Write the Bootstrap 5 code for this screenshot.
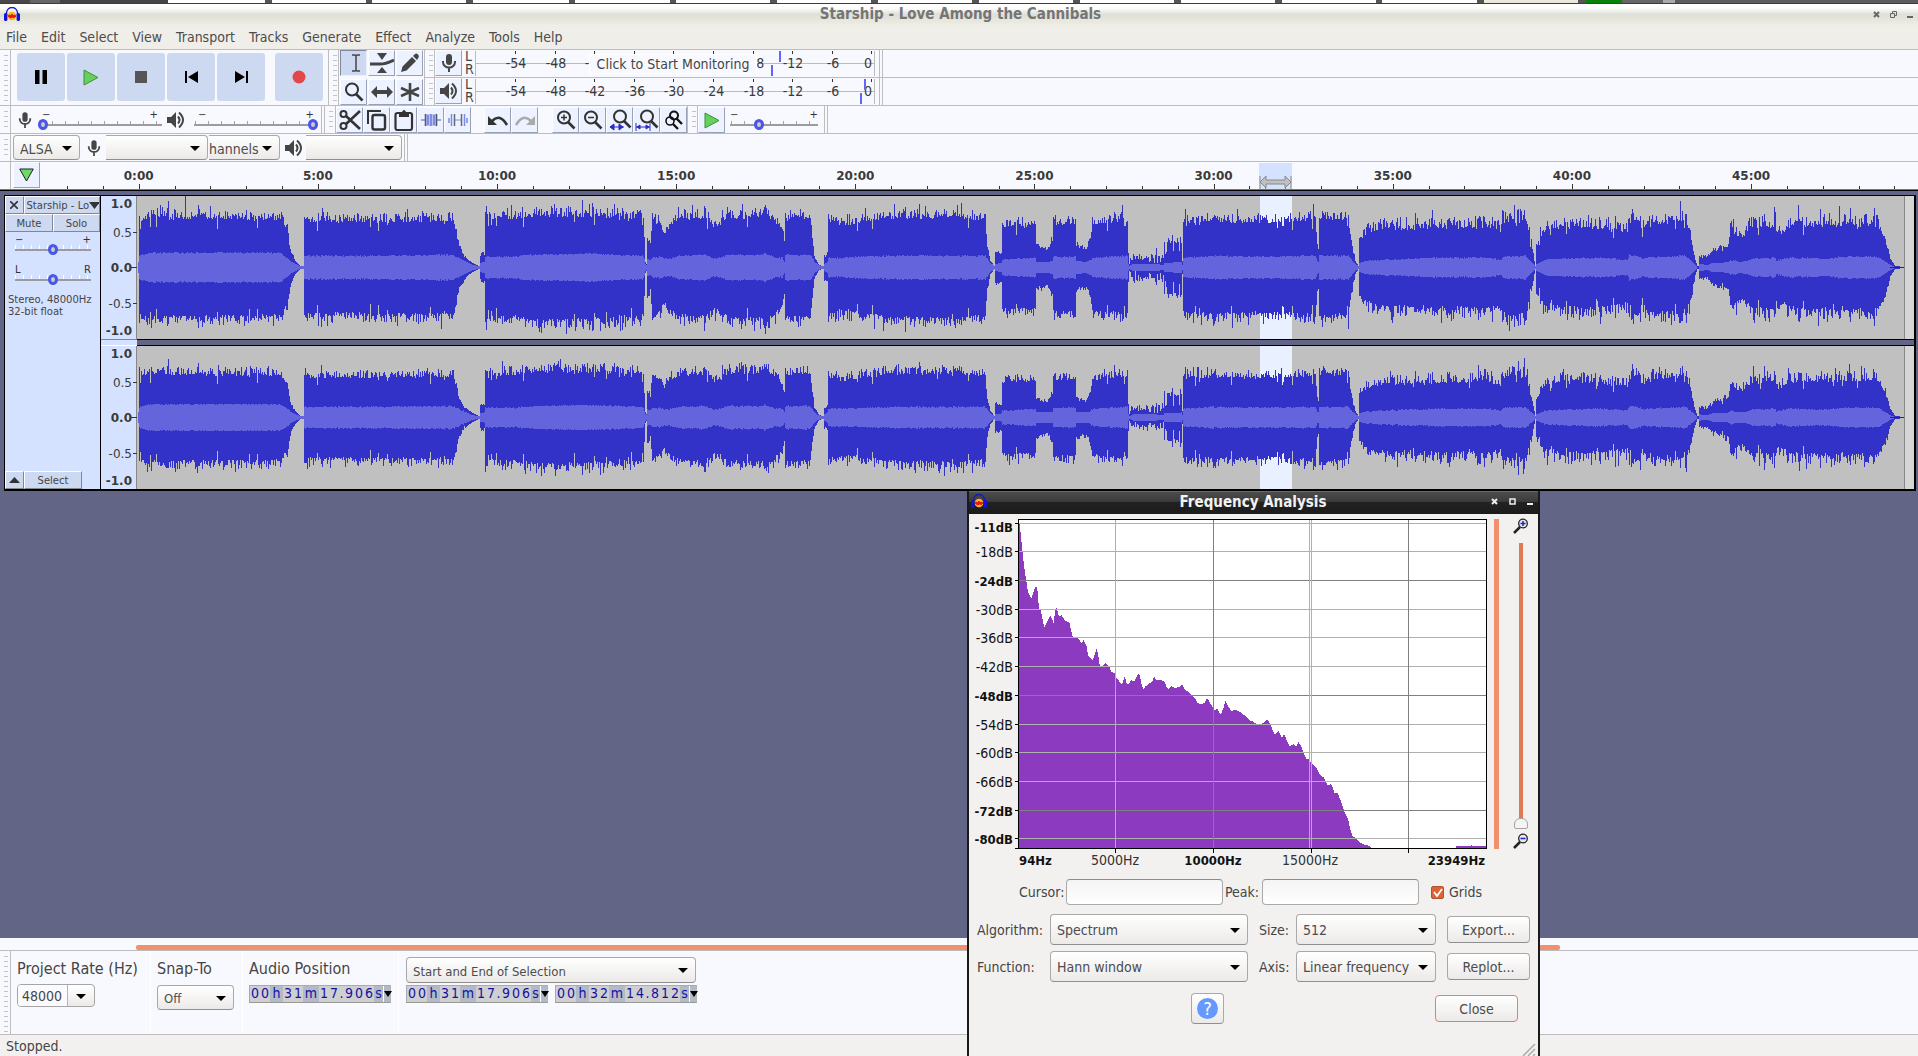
<!DOCTYPE html>
<html lang="en">
<head>
<meta charset="utf-8">
<meta name="viewport" content="width=device-width, initial-scale=1">
<title>Starship - Love Among the Cannibals</title>
<link rel="stylesheet" href="https://cdn.jsdelivr.net/npm/bootstrap@5.3.0/dist/css/bootstrap.min.css">
<style>
:root{--ui:"DejaVu Sans Condensed","DejaVu Sans",sans-serif;--wide:"DejaVu Sans",sans-serif;--rule:#bdbdbd;--paper:#f8f9ff}
body{font:14px/18px var(--ui);color:#454545;background:var(--paper);overflow:hidden}
button,input,select{font:inherit;color:inherit}
svg{display:block;flex:none}
.strip{height:4px;border-bottom:1px solid #3c3c40;background:linear-gradient(90deg,#484848 0 30px,#666 30px 60px,#444 60px 168px,#fff 168px 265px,#555 265px 272px,#fff 272px 366px,#555 366px 372px,#fff 372px 466px,#555 466px 473px,#fff 473px 569px,#555 569px 575px,#fff 575px 670px,#555 670px 676px,#fff 676px 770px,#555 770px 777px,#fff 777px 871px,#555 871px 878px,#fff 878px 972px,#555 972px 979px,#fff 979px 1073px,#555 1073px 1080px,#fff 1080px 1174px,#555 1174px 1181px,#fff 1181px 1275px,#555 1275px 1282px,#fff 1282px 1376px,#555 1376px 1382px,#fff 1382px 1477px,#555 1477px 1484px,#ece8dc 1484px 1578px,#555 1578px 1586px,#0a820a 1586px 1622px,#666 1622px 1663px,#aaa 1663px 1675px,#5c5c5c 1675px)}
.titlebar{height:21px;background:linear-gradient(#fff 0,#fdfdfb 20%,#dddfd8 50%,#e6e6dc 75%,#eeede5);font:bold 15px/18px var(--ui);color:#757575}
.titlebar .winbtns{width:41px}
.titlebar .caption-text{padding:0 0 2px 28px}
.plainbtn{background:none;border:0;padding:0;display:flex;align-items:center;justify-content:center}
.menubar{height:24px;background:#f0eee9}
.menubar a{color:#4c4c4c;text-decoration:none;padding:0 7px 0 6px;margin-right:1px;line-height:24px}
.bar-row{height:28px;border-top:1px solid var(--rule)}
.grip{width:11px;flex:none;border-right:1px solid var(--rule);background:repeating-linear-gradient(#0000 0 3px,#c4c4c4 3px 4px,#0000 4px 5px) 4px 2px/4px calc(100% - 4px) no-repeat}
.endcap{width:4px;flex:none;border-left:1px solid var(--rule);border-right:1px solid var(--rule)}
.tbtn{width:27px;height:26px;flex:none;padding:0;background:#ecf2ff;border:1px solid;border-color:#fdfdff #98a1b5 #98a1b5 #fdfdff;display:flex;align-items:center;justify-content:center;border-radius:0}
.edit-row .tbtn{margin-top:1px}
.tbtn.pressed{background:#cdd9f0;border-color:#7d879f #eef #eef #7d879f}
.big{width:48px;height:48px;border:0;border-radius:3px;background:#cdd9f0;padding:0;display:flex;align-items:center;justify-content:center}
.lr{width:14px;font:14px/13px var(--ui);padding-left:3px}
.meter{width:400px;height:27px;position:relative;border:0;padding:0;background:none;margin-left:-1px}
.tip{left:114px;top:4px;width:168px;background:var(--paper);line-height:18px;border:1px solid #fff;white-space:nowrap}
.pm{font:10px/9px var(--wide);height:9px;color:#333}
.sld{display:flex;flex-direction:column}
input.slide{appearance:none;-webkit-appearance:none;height:11px;margin:0;padding:0;display:block;background:linear-gradient(#9c9c9c,#9c9c9c) 0 5px/100% 2px no-repeat,repeating-linear-gradient(90deg,#a4a4a4 0 1px,#0000 1px 13px) 1px 2px/100% 4px no-repeat;width:100%}
input.slide::-webkit-slider-thumb{-webkit-appearance:none;width:10px;height:11px;border-radius:50%;background:#ccc;border:3px solid #4a55ea}
.track-panel input.slide{background:linear-gradient(#9c9c9c,#9c9c9c) 0 5px/100% 2px no-repeat,repeating-linear-gradient(90deg,#fff 0 1px,#0000 1px 8px) 0 1px/100% 4px no-repeat}
.combo{position:relative;flex:none}
.combo select{appearance:none;-webkit-appearance:none;display:block;width:100%;height:100%;border:1px solid #a9a9a9;border-bottom-color:#8f8f8f;border-radius:4px;background:linear-gradient(#fff,#eceae8);padding:0 0 0 6px;color:#4c4c4c}
.combo::after{content:"";position:absolute;right:8px;top:50%;margin-top:-2px;border:5px solid transparent;border-top:5px solid #000;border-bottom:0;pointer-events:none}
.device-row select,.selbar .combo select{padding-top:3px}
.combo.cut select{border-left:0;border-radius:0 4px 4px 0;padding-left:0}
.timeline{height:28px;border-top:1px solid var(--rule)}
.work{background:#626585;border-top:1px solid #777;box-shadow:inset 0 1px #000;flex:1;padding:5px 2px 0 4px;min-height:0}
.track{border:1px solid #000;border-right-width:2px;border-bottom-width:2px}
.track-panel{width:96px;flex:none;background:#d5e2ff;border-right:1px solid #000;font:10px/12px var(--wide)}
.flatbtn{background:#cdd9f0;border:1px solid;border-color:#fdfdff #808890 #808890 #fdfdff;border-radius:0;padding:0;height:18px;line-height:15px;text-align:center;white-space:nowrap;overflow:hidden}
.flatbtn.name-menu{padding-left:2px;justify-content:space-between;padding-right:1px}
.hscroll{height:12px;padding-top:7px;background:var(--paper)}
.hscroll div{height:5px;background:#f0906c;border-radius:2px;margin-left:136px;margin-right:358px}
.selbar{height:84px;border-top:1px solid var(--rule);font-size:16px}
.selbar .combo{font-size:13px}
.divide{width:1px;background:#fff;flex:none}
.timebox{height:18px;width:142px;background:#b3bac6;border:1px solid #bbb;border-color:#a5abb5 #b5b5b5 #999 #a5abb5;font:14px/15px var(--ui);color:#1010a8;flex:none}
.timebox span{text-align:center;flex:none}
.timebox .dg{width:10px;background:#cfcfcf}
.timebox .u-h{width:13px}
.timebox .u-m{width:16px}
.timebox .u-s{width:9px}
.timebox .dot{width:5px;background:#cfcfcf}
.timebox button{width:8px;flex:none;border:0;border-left:1px solid #fff;background:none;padding:0;display:flex;align-items:center}
.status{height:22px;border-top:1px solid var(--rule);background:#f2f1f0;padding:1px 6px;line-height:20px}
.rate{width:78px;height:23px;border:1px solid #a5a5a5;border-radius:4px;background:linear-gradient(#fff,#eceae8);overflow:hidden}
.rate input{width:50px;border:0;border-right:1px solid #b5b5b5;background:#fbfbff;padding:0 0 0 4px;font-size:14px}
.dialog{position:absolute;left:967px;top:491px;width:573px;height:565px;background:#f2f1f0;border:solid #1a1a1a;border-width:0 2px;display:flex;flex-direction:column}
.dlg-title{height:23px;padding-bottom:2px;background:linear-gradient(#6a6a6a 0 1px,#4c4c4c 1px,#3c3c3c 45%,#222 50%,#1b1b1b);color:#f2f2f2;font:bold 15px/20px var(--ui)}
.bar-v{width:5px;height:330px;background:#f28f6c;margin-top:5px}
.vslide{position:relative;width:24px;height:288px}
.vslide input{appearance:none;-webkit-appearance:none;position:absolute;width:286px;height:14px;margin:0;left:-131px;top:137px;transform:rotate(-90deg);background:linear-gradient(#e07a52,#e07a52) 4px 5px/100% 4px no-repeat}
.vslide input::-webkit-slider-thumb{-webkit-appearance:none;width:11px;height:14px;border-radius:2px 6px 6px 2px;background:#f4f4f2;border:1px solid #a5a5a5}
.txt{height:26px;border:1px solid #aaa;border-top-color:#8c8c8c;border-radius:4px;background:linear-gradient(#f4f4f4,#fff);width:157px}
.dbtn{width:83px;height:27px;border:1px solid #a9a9a9;border-bottom-color:#8f8f8f;border-radius:4px;background:linear-gradient(#fff,#eceae8);padding:0;color:#4c4c4c}
.dbtn.default{border-color:#d98668}
input.tick{appearance:none;-webkit-appearance:none;width:13px;height:13px;margin:0;border:1px solid #b5532d;border-radius:2px;background:#dd6236}
</style>
<script src="https://cdn.jsdelivr.net/npm/bootstrap@5.3.0/dist/js/bootstrap.bundle.min.js"></script>
</head>
<body class="d-flex flex-column vh-100">
<svg width="0" height="0" class="position-absolute" aria-hidden="true">
<symbol id="logo" viewBox="0 0 16 16"><path d="M2.500 9V6a5.500 5.500 0 0 1 11 0v3" fill="none" stroke="#1414c8" stroke-width="1.300"/><circle cx="8" cy="9" r="4.300" fill="#f5b81e"/><path d="M4 9l1.500-1 1 1 1.500-2 1 2 1-1 2 1-1.500 1.500-2-.5-2 1-1-1z" fill="#e11" stroke="#e11"/><rect x="0" y="6" width="3.400" height="8" rx="1.600" fill="#1212d8"/><rect x="12.600" y="6" width="3.400" height="8" rx="1.600" fill="#1212d8"/></symbol>
<symbol id="mic" viewBox="0 0 16 20"><rect x="5" y="1" width="6" height="11" rx="3" fill="#454545"/><path d="M2 8v1a6 5.500 0 0 0 12 0V8M8 15v4" fill="none" stroke="#454545" stroke-width="2"/></symbol>
<symbol id="spk" viewBox="0 0 20 18"><path d="M1 6h4l5-5v16l-5-5H1z" fill="#454545"/><path d="M12 5.500q3 3.500 0 7M13 1.500q8 7.500 0 15" fill="none" stroke="#454545" stroke-width="2"/></symbol>
<symbol id="mag" viewBox="0 0 20 20"><circle cx="8" cy="7.500" r="6" fill="none" stroke="#333" stroke-width="2"/><path d="M12 12l6.500 6.500" stroke="#333" stroke-width="2.600"/></symbol>
<symbol id="lens" viewBox="0 0 16 16"><path d="M7 9L1 15" stroke="#222" stroke-width="2.500"/><circle cx="10" cy="5.500" r="4.300" fill="#e6e6f0" stroke="#222" stroke-width="1.300"/></symbol>
</svg>

<div class="strip"></div>
<header class="titlebar d-flex align-items-center">
  <svg width="16" height="16" class="ms-1"><use href="#logo"/></svg>
  <div class="flex-fill text-center caption-text">Starship - Love Among the Cannibals</div>
  <div class="winbtns d-flex justify-content-between align-items-center me-1">
    <button class="plainbtn" aria-label="Close window"><svg width="7" height="7"><path d="M1 1l5 5M6 1L1 6" stroke="#666" stroke-width="2"/></svg></button>
    <button class="plainbtn" aria-label="Restore window"><svg width="7" height="7"><path d="M2.500 2.500V.5h4v4h-2M.5 2.500h4v4h-4z" fill="none" stroke="#666"/></svg></button>
    <button class="plainbtn" aria-label="Minimise window"><svg width="7" height="7"><path d="M0 6h6" stroke="#666" stroke-width="2"/></svg></button>
  </div>
</header>
<nav class="menubar d-flex">
  <a href="#">File</a><a href="#">Edit</a><a href="#">Select</a><a href="#">View</a><a href="#">Transport</a><a href="#">Tracks</a><a href="#">Generate</a><a href="#">Effect</a><a href="#">Analyze</a><a href="#">Tools</a><a href="#">Help</a>
</nav>

<div class="d-flex">
  <div class="d-flex" style="height:56px;border-top:1px solid var(--rule)">
    <div class="grip"></div>
    <div class="d-flex align-items-start" style="gap:2px;padding:3px 5px 0 6px">
      <button class="big" aria-label="Pause"><svg width="12" height="14"><path d="M0 0h4.500v14H0zM7.500 0H12v14H7.500z"/></svg></button>
      <button class="big" aria-label="Play"><svg width="16" height="17"><path d="M1 1v15L15 8.500z" fill="#66d05c" stroke="#3d8f3d"/></svg></button>
      <button class="big" aria-label="Stop"><svg width="12" height="12"><path d="M0 0h12v12H0z" fill="#555"/></svg></button>
      <button class="big" aria-label="Skip to start"><svg width="13" height="12"><path d="M0 0h2v12H0zM13 0v12L3 6z"/></svg></button>
      <button class="big" aria-label="Skip to end"><svg width="13" height="12"><path d="M11 0h2v12h-2zM0 0v12l10-6z"/></svg></button>
      <button class="big ms-2" aria-label="Record"><svg width="14" height="14"><circle cx="7" cy="7" r="6.500" fill="#e34848"/></svg></button>
    </div>
    <div class="grip" style="border-left:1px solid var(--rule)"></div>
    <div style="display:grid;grid-template-columns:repeat(3,27px);gap:1px;padding:0 1px;row-gap:2px">
      <button class="tbtn pressed" aria-label="Selection tool"><svg width="12" height="18" class="ms-1"><path d="M2 1h3l1 1 1-1h3M6 2v14M2 17h3l1-1 1 1h3" fill="none" stroke="#444" stroke-width="1.500"/></svg></button>
      <button class="tbtn" aria-label="Envelope tool"><svg width="24" height="20"><path d="M7 0h10l-5 7zM7 20h10l-5-6z" fill="#444"/><path d="M0 11h10q5 0 14-4" fill="none" stroke="#444" stroke-width="3"/></svg></button>
      <button class="tbtn" aria-label="Draw tool"><svg width="20" height="20"><path d="M1 19l1.500-5.500L12 4l4 4-9.500 9.500zM13 3l2-2q1.500-1 3 .5t.5 3L17 7z" fill="#444"/></svg></button>
      <button class="tbtn" aria-label="Zoom tool"><svg width="20" height="20"><use href="#mag"/></svg></button>
      <button class="tbtn" aria-label="Time shift tool"><svg width="22" height="14"><path d="M0 7l6-6v4h10V1l6 6-6 6V9H6v4z" fill="#444"/></svg></button>
      <button class="tbtn" aria-label="Multi tool"><svg width="20" height="20"><path d="M10 1v18M1 6l18 8M19 6L1 14" stroke="#444" stroke-width="2.600"/></svg></button>
    </div>
  </div>
  <div class="flex-fill">
    <div class="bar-row d-flex">
      <div class="grip" style="border-left:1px solid var(--rule)"></div>
      <button class="tbtn" aria-label="Recording meter"><svg width="16" height="20"><use href="#mic"/></svg></button>
      <div class="lr">L<br>R</div>
      <button class="meter text-start" id="rec" aria-label="Recording level"><span class="tip position-absolute text-center">Click to Start Monitoring</span></button>
      <div class="endcap ms-1"></div>
    </div>
    <div class="bar-row d-flex">
      <div class="grip" style="border-left:1px solid var(--rule)"></div>
      <button class="tbtn" aria-label="Playback meter"><svg width="20" height="18"><use href="#spk"/></svg></button>
      <div class="lr">L<br>R</div>
      <button class="meter" id="play" aria-label="Playback level"></button>
      <div class="endcap ms-1"></div>
    </div>
  </div>
</div>

<div class="bar-row edit-row d-flex align-items-stretch">
  <div class="grip"></div>
  <div class="d-flex align-items-center" style="padding:1px 0 0 7px">
    <svg width="14" height="20" viewBox="0 0 16 20"><use href="#mic"/></svg>
    <label class="sld" style="width:124px;margin-left:6px"><span class="pm d-flex justify-content-between px-1"><span>−</span><span>+</span></span><input class="slide" type="range" value="0" aria-label="Recording volume"></label>
    <svg width="20" height="18" class="ms-1"><use href="#spk"/></svg>
    <label class="sld" style="width:124px;margin-left:8px"><span class="pm d-flex justify-content-between px-1"><span>−</span><span>+</span></span><input class="slide" type="range" value="100" aria-label="Playback volume"></label>
  </div>
  <div class="endcap" style="margin-left:3px"></div>
  <div class="grip"></div>
  <button class="tbtn" aria-label="Cut"><svg width="22" height="20"><circle cx="4.500" cy="4" r="3" fill="none" stroke="#333" stroke-width="2"/><circle cx="4.500" cy="16" r="3" fill="none" stroke="#333" stroke-width="2"/><path d="M7 6l14 13M7 14L21 1" stroke="#333" stroke-width="2.600"/></svg></button>
  <button class="tbtn" aria-label="Copy"><svg width="20" height="22"><path d="M1 15V2h13" fill="none" stroke="#333" stroke-width="2"/><rect x="5.500" y="6" width="12.500" height="14.500" rx="2" fill="none" stroke="#333" stroke-width="2.400"/></svg></button>
  <button class="tbtn" aria-label="Paste"><svg width="20" height="22"><rect x="1.500" y="4" width="16.500" height="17" rx="2" fill="none" stroke="#333" stroke-width="2.200"/><path d="M5 3h3q2-4 4 0h3v5H5z" fill="#333"/></svg></button>
  <button class="tbtn" aria-label="Trim"><svg width="20" height="14"><path d="M0 7h4M16 7h4" stroke="#7d8be6" stroke-width="1.500"/><path d="M4 1h12v12H4z" fill="#b9c3f4"/><path d="M7 2v10M10 1v12M13 2v10" stroke="#6b7be0" stroke-width="1.500"/><path d="M4.500 1v12M15.500 1v12" stroke="#556" stroke-width="1.500"/></svg></button>
  <button class="tbtn" aria-label="Silence"><svg width="20" height="14"><path d="M1 5v5M3.500 1v12M16.500 1v12M19 5v5" stroke="#7d8be6" stroke-width="1.500"/><path d="M6 7h8" stroke="#7d8be6"/><path d="M6.500 1v12M13.500 1v12" stroke="#667" stroke-width="1.500"/></svg></button>
  <span style="width:13px"></span>
  <button class="tbtn" aria-label="Undo"><svg width="22" height="16"><path d="M1 4v9h9z" fill="#333"/><path d="M5 9Q13 1 20 13" fill="none" stroke="#333" stroke-width="2.600"/></svg></button>
  <button class="tbtn" aria-label="Redo"><svg width="22" height="16"><path d="M21 4v9h-9z" fill="#aaa"/><path d="M17 9Q9 1 2 13" fill="none" stroke="#aaa" stroke-width="2.600"/></svg></button>
  <span style="width:14px"></span>
  <button class="tbtn" aria-label="Zoom in"><svg width="20" height="20"><use href="#mag"/><path d="M5 7.500h6M8 4.500v6" stroke="#333" stroke-width="1.500"/></svg></button>
  <button class="tbtn" aria-label="Zoom out"><svg width="20" height="20"><use href="#mag"/><path d="M5 7.500h6" stroke="#333" stroke-width="1.500"/></svg></button>
  <button class="tbtn" aria-label="Fit selection"><svg width="24" height="22"><use href="#mag" x="4" y="0" width="20" height="20"/><path d="M2 18h14M6 15l-4 3 4 3zM11 15l4 3-4 3z" stroke="#2a2ac8" fill="#2a2ac8"/></svg></button>
  <button class="tbtn" aria-label="Fit project"><svg width="24" height="22"><use href="#mag" x="4" y="0" width="20" height="20"/><path d="M1 14v8M15 14v8M1 18h14M5 16l-3 2 3 2zM11 16l3 2-3 2z" stroke="#2a2ac8" fill="#2a2ac8"/></svg></button>
  <button class="tbtn" aria-label="Zoom toggle"><svg width="20" height="20"><circle cx="10" cy="5.500" r="4" fill="none" stroke="#111" stroke-width="2"/><circle cx="6" cy="11" r="4" fill="none" stroke="#111" stroke-width="1.600"/><path d="M12 8l6 6M9 14l5 5" stroke="#111" stroke-width="2.400"/></svg></button>
  <div class="grip" style="border-left:1px solid var(--rule)"></div>
  <button class="tbtn" aria-label="Play at speed"><svg width="16" height="17"><path d="M1 1v15L15 8.500z" fill="#66d05c" stroke="#3d8f3d"/></svg></button>
  <label class="sld" style="width:88px;margin:4px 6px 0 5px"><span class="pm d-flex justify-content-between"><span>−</span><span>+</span></span><input class="slide" type="range" value="31" aria-label="Playback speed"></label>
  <div class="endcap"></div>
</div>

<div class="bar-row device-row d-flex">
  <div class="grip"></div>
  <div class="combo" style="width:67px;height:25px;margin:1px 0 0 2px"><select aria-label="Audio host"><option>ALSA</option></select></div>
  <svg width="14" height="20" viewBox="0 0 16 20" class="align-self-center" style="margin-left:7px"><use href="#mic"/></svg>
  <div class="combo cut" style="width:102px;height:25px;margin:1px 0 0 5px"><select aria-label="Recording device"><option></option></select></div>
  <div class="combo cut" style="width:71px;height:25px;margin:1px 0 0 1px"><select aria-label="Recording channels"><option>hannels</option></select></div>
  <svg width="20" height="18" class="align-self-center ms-1"><use href="#spk"/></svg>
  <div class="combo cut" style="width:96px;height:25px;margin:1px 2px 0 2px"><select aria-label="Playback device"><option></option></select></div>
  <div class="endcap"></div>
</div>

<div class="timeline d-flex">
  <div style="width:11px;border-right:1px solid var(--rule)"></div>
  <button class="tbtn" aria-label="Pinned play head" style="margin-left:2px"><svg width="15" height="14"><path d="M.7 1h13.600L7.500 13z" fill="#70d868" stroke="#222"/></svg></button>
  <svg id="ruler" class="flex-fill" height="27"></svg>
</div>

<main class="work">
  <div class="track d-flex">
    <div class="track-panel d-flex flex-column">
      <div class="d-flex"><button class="flatbtn d-flex align-items-center justify-content-center" style="width:19px" aria-label="Close track"><svg width="8" height="8"><path d="M0 0l8 8M8 0L0 8" stroke="#333" stroke-width="1.600"/></svg></button><button class="flatbtn name-menu d-flex align-items-center flex-fill"><span>Starship - Lo</span><svg width="11" height="7"><path d="M0 0h11L5.500 7z" fill="#333"/></svg></button></div>
      <div class="d-flex"><button class="flatbtn" style="width:48px">Mute</button><button class="flatbtn flex-fill">Solo</button></div>
      <label class="sld" style="width:76px;margin:3px 0 0 10px"><span class="pm d-flex justify-content-between"><span>−</span><span>+</span></span><input class="slide" type="range" aria-label="Gain"></label>
      <label class="sld" style="width:76px;margin:10px 0 0 10px"><span class="pm d-flex justify-content-between"><span>L</span><span>R</span></span><input class="slide" type="range" aria-label="Pan"></label>
      <div style="padding:9px 0 0 3px">Stereo, 48000Hz<br>32-bit float</div>
      <div class="d-flex mt-auto"><button class="flatbtn d-flex align-items-center justify-content-center" style="width:19px" aria-label="Collapse track"><svg width="11" height="6"><path d="M0 6h11L5.500 0z" fill="#333"/></svg></button><button class="flatbtn" style="width:58px">Select</button></div>
    </div>
    <svg id="vruler" width="36" height="293"></svg>
    <svg id="wave" class="flex-fill" height="293" shape-rendering="crispEdges"></svg>
  </div>
</main>

<div class="hscroll"><div></div></div>
<section class="selbar d-flex">
  <div class="grip"></div>
  <div style="padding:7px 6px 0 6px;width:139px"><label for="rate" class="d-block text-nowrap" style="height:26px;line-height:22px">Project Rate (Hz)</label>
    <div class="rate d-flex combo"><input id="rate" value="48000"></div></div>
  <div class="divide"></div>
  <div style="padding:7px 6px 0 6px;width:91px"><label for="snap" class="d-block" style="height:27px;line-height:22px">Snap-To</label>
    <div class="combo" style="width:77px;height:25px"><select id="snap"><option>Off</option></select></div></div>
  <div class="divide"></div>
  <div style="padding:7px 6px 0 6px;width:155px"><div style="height:27px;line-height:22px">Audio Position</div><div class="timebox d-flex" data-t="00h31m17.906s"></div></div>
  <div class="divide"></div>
  <div style="padding:6px 0 0 7px"><div class="combo" style="width:290px;height:26px;margin-bottom:2px"><select aria-label="Selection mode"><option>Start and End of Selection</option></select></div>
    <div class="d-flex" style="gap:7px"><div class="timebox d-flex" data-t="00h31m17.906s"></div><div class="timebox d-flex" data-t="00h32m14.812s"></div></div></div>
</section>
<footer class="status">Stopped.</footer>

<div class="dialog" role="dialog" aria-label="Frequency Analysis">
  <div class="dlg-title d-flex align-items-center">
    <svg width="16" height="16" style="margin-left:2px"><use href="#logo"/></svg>
    <div class="flex-fill text-center" style="padding-left:28px">Frequency Analysis</div>
    <div class="d-flex justify-content-between align-items-center" style="width:42px;margin-right:5px">
      <button class="plainbtn" aria-label="Close dialog"><svg width="7" height="7"><path d="M1 1l5 5M6 1L1 6" stroke="#eee" stroke-width="2"/></svg></button>
      <button class="plainbtn" aria-label="Maximise dialog"><svg width="7" height="7"><path d="M1 1h5v5H1z" fill="none" stroke="#eee" stroke-width="1.500"/></svg></button>
      <button class="plainbtn" aria-label="Minimise dialog"><svg width="7" height="7"><path d="M1 6h6" stroke="#eee" stroke-width="2"/></svg></button>
    </div>
  </div>
  <div class="d-flex">
    <svg id="plot" width="525" height="360" shape-rendering="crispEdges"></svg>
    <div class="bar-v"></div>
    <div class="d-flex flex-column align-items-center" style="margin:4px 0 0 10px;width:24px">
      <svg width="16" height="16"><use href="#lens"/><path d="M7.500 5.500h5M10 3v5" stroke="#22b" stroke-width="1.500"/></svg>
      <div class="vslide" style="margin:8px 0 3px"><input type="range" value="0" aria-label="Zoom"></div>
      <svg width="16" height="16"><use href="#lens"/><path d="M7.500 5.500h5" stroke="#22b" stroke-width="1.500"/></svg>
    </div>
  </div>
  <div class="d-flex align-items-center" style="margin:5px 0 0 50px">
    <label for="cur" style="width:47px">Cursor:</label><input id="cur" class="txt"><label for="peak" style="width:39px;padding-left:2px">Peak:</label><input id="peak" class="txt">
    <span class="position-relative d-flex" style="margin-left:12px"><input type="checkbox" class="tick" id="grids" checked><svg class="position-absolute" width="13" height="13" style="pointer-events:none"><path d="M3 6l3 4 5-7" fill="none" stroke="#fff" stroke-width="1.800"/></svg></span><label for="grids" style="margin-left:5px">Grids</label>
  </div>
  <div style="display:grid;grid-template-columns:73px 209px 37px 151px 83px;padding:9px 0 0 8px;row-gap:6px;align-items:center">
    <label for="alg">Algorithm:</label><div class="combo" style="width:198px;height:31px"><select id="alg"><option>Spectrum</option></select></div>
    <label for="size">Size:</label><div class="combo" style="width:140px;height:31px"><select id="size"><option>512</option></select></div><button class="dbtn">Export...</button>
    <label for="fun">Function:</label><div class="combo" style="width:198px;height:31px"><select id="fun"><option>Hann window</option></select></div>
    <label for="axis">Axis:</label><div class="combo" style="width:140px;height:31px"><select id="axis"><option>Linear frequency</option></select></div><button class="dbtn">Replot...</button>
  </div>
  <div class="d-flex align-items-center" style="margin:11px 20px 0 222px">
    <button class="dbtn d-flex align-items-center justify-content-center" style="width:33px;height:31px" aria-label="Help"><svg width="21" height="21"><circle cx="10.500" cy="10.500" r="10.500" fill="#6699ff"/><text x="10.500" y="17" text-anchor="middle" font-size="18" fill="#fff">?</text></svg></button>
    <button class="dbtn default ms-auto">Close</button>
  </div>
  <svg class="mt-auto ms-auto" width="16" height="14"><path d="M1 14L13 2M6 14l7-7M11 14l2-2" stroke="#aaa" stroke-width="1.500"/></svg>
</div>

<script>
const el=id=>document.getElementById(id);
const line=(x1,y1,x2,y2,c,w=1)=>`<path d="M${x1} ${y1}L${x2} ${y2}" stroke="${c}" stroke-width="${w}"/>`;
const label=(x,y,s,size,bold,fam,anchor="middle",fill="#3a3a3a")=>`<text x="${x}" y="${y}" text-anchor="${anchor}" font-size="${size}" font-weight="${bold?700:400}" font-family="${fam}" fill="${fill}">${s}</text>`;
const WIDE="DejaVu Sans",UI="DejaVu Sans Condensed";

// level meters; labels listed in skip lie wholly under the hint
function meter(id,peaks,skip=[]){
  let h=line(.5,1,.5,26,"#bbb")+line(0,13.5,400,13.5,"#bbb")+line(399.5,1,399.5,26,"#bbb");
  for(let i=0;i<10;i++){
    const x=Math.round(41+i*39.6),db=-54+i*6;
    h+=line(x-.5,1,x-.5,4,"#333");
    if(!skip.includes(db))h+=label(i==9?x-4:x,18,db,14,false,UI);
  }
  peaks.forEach((x,i)=>h+=line(x,i?15:1,x,i?26:12,"#6464f5",2));
  el(id).insertAdjacentHTML("afterbegin",`<svg width="400" height="27">${h}</svg>`);
}
meter("rec",[305,297],[-36,-30,-24]);meter("play",[390,386]);

// time ruler, five minutes per major step
{
  const off=40,z=138.7-off,step=179.15;let h=`<rect x="${1259-off}" y="1" width="33" height="27" fill="#d5e2ff"/>`;
  for(let i=-2;i<50;i++){const x=Math.round(z+i*step/5)+.5;h+=line(x,i%5?24:22,x,27,"#333");}
  for(let i=0;i<10;i++)h+=label(z+i*step,18,i*5+":00",12,true,WIDE);
  const a=1260-off,b=1291-off;
  h+=`<path d="M${a} 14v13M${a+5.5} 14v13M${b} 14v13M${b-5.5} 14v13" stroke="#888"/><path d="M${a} 20l6-6v4h${b-a-12}v-4l6 6-6 6v-4h-${b-a-12}v4z" fill="#c0c0c0" stroke="#888"/>`;
  el("ruler").innerHTML=h;
}

// vertical amplitude rulers
{
  let h='<rect width="36" height="293" fill="#d5e2ff"/>'+line(0,143.5,36,143.5,"#888")+line(0,149.5,36,149.5,"#fff")+line(35.5,0,35.5,144,"#888")+line(35.5,150,35.5,293,"#888");
  for(const t of [0,150])[["1.0",12,1],["0.5",41,0],["0.0",76,1],["-0.5",112,0],["-1.0",139,1]].forEach(([s,y,b],i)=>{
    h+=label(31,y+t,s,12,b,WIDE,"end");
    if(i==1||i==3||i==2)h+=line(i==2?30:32,[0,36.5,71.5,107.5][i]+t,36,[0,36.5,71.5,107.5][i]+t,"#333");
  });
  el("vruler").innerHTML=h;
}

// waveform envelope: x, peak, rms
const env=[[138,5,5],[139,48,11],[149,50,14],[280,48,14],[287,36,9],[290,15,6],[295,6,3],[300,1,1],[303,1,1],[304,46,11],[330,46,11],[380,46,11],[453,47,12],[456,33,10],[458,22,9],[464,10,6],[472,4,2],[479,1,1],[480,13,4],[484,14,5],[485,49,10],[515,49,10],[530,52,12],[590,52,13],[615,51,12],[643,49,11],[645,5,3],[646,3,2],[647,30,8],[650,20,7],[652,47,9],[660,42,10],[664,34,8],[668,40,8],[678,48,11],[705,50,12],[713,40,8],[720,43,9],[727,50,12],[762,50,12],[764,60,14],[768,52,12],[775,44,9],[782,38,9],[784,25,5],[785,48,12],[809,50,12],[812,28,9],[814,10,5],[818,3,2],[821,1,1],[823,1,1],[824,9,3],[827,12,5],[828,47,9],[840,42,9],[860,45,10],[890,50,11],[960,51,11],[985,47,11],[987,20,8],[990,6,4],[994,1,1],[995,15,3],[1001,13,4],[1002,41,7],[1035,41,9],[1036,20,5],[1047,16,5],[1052,25,6],[1053,43,10],[1075,43,10],[1076,20,6],[1086,18,5],[1090,28,7],[1093,43,9],[1127,47,11],[1128,14,3],[1129,3,1],[1133,7,3],[1155,8,3],[1163,8,2],[1164,25,4],[1181,25,5],[1182,6,2],[1183,45,9],[1210,46,11],[1260,45,10],[1315,48,11],[1317,20,6],[1318,18,5],[1319,49,11],[1348,48,11],[1351,25,7],[1355,6,3],[1358,1,1],[1359,26,4],[1365,32,6],[1380,38,7],[1438,39,9],[1490,40,9],[1500,33,7],[1503,46,10],[1525,46,11],[1527,40,9],[1532,15,4],[1535,1,1],[1536,20,3],[1541,30,5],[1545,37,7],[1560,39,8],[1600,40,9],[1627,34,7],[1629,47,12],[1640,47,10],[1642,30,8],[1645,43,9],[1685,46,11],[1690,32,7],[1694,10,3],[1697,1,0],[1698,1,0],[1699,9,3],[1707,9,2],[1712,14,4],[1720,18,4],[1728,20,5],[1731,38,7],[1740,28,5],[1746,34,6],[1752,40,8],[1775,41,9],[1776,32,6],[1783,34,8],[1790,41,9],[1830,41,8],[1840,42,10],[1878,41,10],[1884,30,6],[1890,8,2],[1895,1,0],[1904,0,0]];
let seed=7;const rnd=()=>(seed=(seed*1103515245+12345)&0x7fffffff)/0x7fffffff;
{
  const off=137;let k=0,body=[["",""],["",""]];
  for(let x=138;x<1904;x++){
    while(k<env.length-2&&env[k+1][0]<=x)k++;
    const [x0,p0,r0]=env[k],[x1,p1,r1]=env[k+1],f=(x-x0)/(x1-x0),p=p0+(p1-p0)*f,r=r0+(r1-r0)*f;
    const quiet=x>1129&&x<1182,loose=x>1359?.5:.32;
    const shared=Math.pow(rnd(),3),gap=quiet?.3:.05,dip=rnd()<gap?(quiet?.5:.8):1;
    for(const c of [0,1]){
      const g=c?.88:1;
      const amp=()=>p<9&&!quiet?p:Math.min(69,(p*.95*dip+(quiet?9:p*loose)*(shared*.5+Math.pow(rnd(),3)*.6)+rnd()*2)*g);
      const m=71.5+c*150,u=Math.round(amp()),d=Math.round(amp()),q=Math.max(0,Math.round((r+(r>6?rnd()*1.6-.6:0))*(c?.9:1)));
      body[c][0]+=`M${x-off+.5} ${m-u-.5}V${m+d+.5}`;
      if(q>0)body[c][1]+=`M${x-off+.5} ${m-q-.5}V${m+q+.5}`;
    }
  }
  body[0][0]+="M48.500 0V71";
  let h="";
  for(const c of [0,1]){
    const t=c*150;
    h+=`<rect y="${t}" width="1777" height="143" fill="#c0c0c0"/><rect x="${1260-off}" y="${t}" width="32" height="143" fill="#e9f0ff"/>`
      +`<path d="${body[c][0]}" stroke="#3232c8"/><path d="${body[c][1]}" stroke="#6464dc"/>`
      +line(1890-off,71.5+t,1904-off,71.5+t,"#222290")+`<rect x="${1904-off}" y="${t}" width="20" height="143" fill="#d6d6d6"/>`+line(1904.5-off,t,1904.5-off,t+143,"#888");
  }
  h+=line(0,143.5,1777,143.5,"#000")+line(0,149.5,1777,149.5,"#000")+'<rect y="144" width="1777" height="5" fill="#626585"/>';
  el("wave").innerHTML=h;
}

// time fields
document.querySelectorAll(".timebox").forEach(b=>{
  b.innerHTML=[...b.dataset.t].map(ch=>`<span class="${/\d/.test(ch)?"dg":ch=="."?"dot":"u-"+ch}">${ch}</span>`).join("")+'<button aria-label="Time format"><svg width="8" height="6"><path d="M0 0h8L4 6z"/></svg></button>';
});

// spectrum: points are [frequency position, level] on a 1240 by 990 grid
{
  const pts=[158,100,160,118,163,150,166,185,169,215,172,240,176,270,180,300,184,315,190,325,195,308,200,292,205,290,208,330,210,358,215,362,219,385,224,412,229,402,233,390,240,378,244,386,249,400,253,358,257,354,261,372,265,380,269,375,275,385,280,393,291,398,296,425,301,446,307,440,313,445,318,450,323,460,328,450,336,465,340,495,346,502,352,512,358,495,363,477,367,490,370,520,375,530,381,525,386,518,392,526,398,533,403,547,411,548,414,563,423,573,430,584,435,570,438,558,443,583,448,583,455,570,463,575,468,562,474,550,478,556,482,580,487,598,494,588,503,581,510,576,516,560,522,569,530,570,543,573,549,590,554,598,563,588,570,594,585,590,590,582,596,594,600,602,608,605,617,618,623,622,630,637,640,643,650,638,657,624,664,638,670,648,676,661,684,657,693,674,699,658,706,632,713,648,720,663,734,660,750,670,760,680,772,693,780,695,790,704,805,700,818,688,826,706,835,732,840,732,847,724,856,745,862,732,868,750,876,769,888,762,893,770,900,756,906,768,914,790,922,808,928,808,936,822,948,834,958,856,966,861,978,886,987,882,995,908,1003,908,1011,930,1022,965,1031,985,1038,1020,1043,1037,1053,1046,1060,1055,1075,1064,1090,1068,1092,1073,1317,1073,1318,1069,1356,1069,1359,1064,1362,1069,1397,1069,1397,1076];
  const ox=969,oy=514,X=v=>Math.round(960+v/2.658-ox),Y=v=>Math.round(490+v/3-oy);
  let d=`M${X(158)} ${Y(1076)}`;for(let i=0;i<pts.length;i+=2)d+=`L${(960+pts[i]/2.658-ox).toFixed(1)} ${(490+pts[i+1]/3-oy).toFixed(1)}`;
  let h=`<rect x="49.500" y="5.500" width="468" height="329" fill="#fff"/><path d="${d}z" fill="#8c3bc0"/>`;
  const rows=[100,184,271,358,442,529,616,703,787,874,961,1045],names=[-11,-18,-24,-30,-36,-42,-48,-54,-60,-66,-72,-80];
  rows.forEach((v,i)=>{const y=Y(v)+.5,b=[0,2,6,10,11].includes(i);
    h+=line(50,y,517,y,[2,6,10].includes(i)?"#808080":"#b0b0b0")+line(46,y,49,y,"#000")+label(44,y+(i?5:8),names[i]+"dB",b?13:14,b,UI,"end","#111");});
  [[413,"#b0b0b0"],[673,"#808080"],[927,"#b0b0b0"],[931,"#b0b0b0"],[1192,"#808080"]].forEach(([v,c],i)=>{const x=X(v)+(i==3?1.5:.5);h+=line(x,6,x,334,c);if(i!=2)h+=line(x,335,x,339,"#000");});
  h+=`<rect x="49.500" y="5.500" width="468" height="329" fill="none" stroke="#000"/>`+line(46,334.5,49,334.5,"#000");
  h+=label(50,351,"94Hz",13,1,UI,"start","#111")+label(X(413),351,"5000Hz",14,0,UI,"middle","#333")+label(X(673),351,"10000Hz",13,1,UI,"middle","#111")+label(X(931),351,"15000Hz",14,0,UI,"middle","#333")+label(516,351,"23949Hz",13,1,UI,"end","#111");
  el("plot").innerHTML=h;
}
</script>
</body>
</html>
